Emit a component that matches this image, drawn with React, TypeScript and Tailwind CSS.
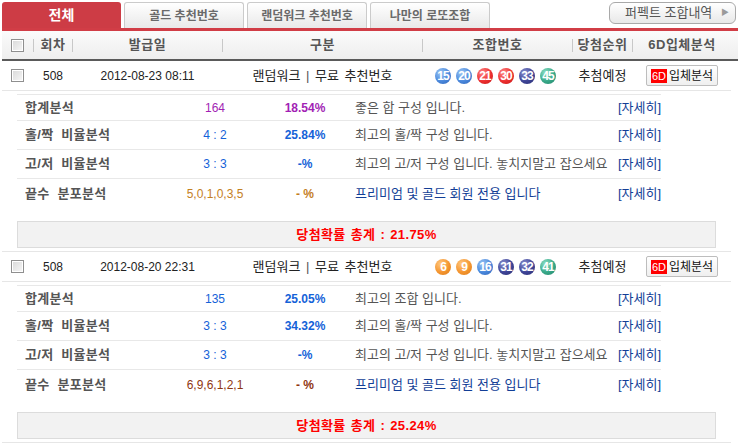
import React from "react";

type Detail = {
  label: string;
  value: string;
  pct: string;
  desc: string;
  tone: string;
  premium?: boolean;
};

type Entry = {
  round: string;
  date: string;
  balls: number[];
  details: Detail[];
  total: string;
};

const entries: Entry[] = [
  {
    round: "508",
    date: "2012-08-23 08:11",
    balls: [15, 20, 21, 30, 33, 45],
    total: "21.75%",
    details: [
      { label: "합계분석", value: "164", pct: "18.54%", desc: "좋은 합 구성 입니다.", tone: "text-[#a21fb4]" },
      { label: "홀/짝 비율분석", value: "4 : 2", pct: "25.84%", desc: "최고의 홀/짝 구성 입니다.", tone: "text-[#1462d8]" },
      { label: "고/저 비율분석", value: "3 : 3", pct: "-%", desc: "최고의 고/저 구성 입니다. 놓치지말고 잡으세요", tone: "text-[#1462d8]" },
      { label: "끝수 분포분석", value: "5,0,1,0,3,5", pct: "- %", desc: "프리미엄 및 골드 회원 전용 입니다", tone: "text-[#c4801f]", premium: true },
    ],
  },
  {
    round: "508",
    date: "2012-08-20 22:31",
    balls: [6, 9, 16, 31, 32, 41],
    total: "25.24%",
    details: [
      { label: "합계분석", value: "135", pct: "25.05%", desc: "최고의 조합 입니다.", tone: "text-[#1462d8]" },
      { label: "홀/짝 비율분석", value: "3 : 3", pct: "34.32%", desc: "최고의 홀/짝 구성 입니다.", tone: "text-[#1462d8]" },
      { label: "고/저 비율분석", value: "3 : 3", pct: "-%", desc: "최고의 고/저 구성 입니다. 놓치지말고 잡으세요", tone: "text-[#1462d8]" },
      { label: "끝수 분포분석", value: "6,9,6,1,2,1", pct: "- %", desc: "프리미엄 및 골드 회원 전용 입니다", tone: "text-[#8f3510]", premium: true },
    ],
  },
];

function ballColor(n: number) {
  if (n <= 10) return "bg-[radial-gradient(circle_at_35%_30%,#ffc77e_0%,#f4952f_55%,#dc7a16_100%)]";
  if (n <= 20) return "bg-[radial-gradient(circle_at_35%_30%,#9cc6f4_0%,#4a88dc_55%,#2d63b6_100%)]";
  if (n <= 30) return "bg-[radial-gradient(circle_at_35%_30%,#ff8a8a_0%,#ec2f2f_55%,#c41616_100%)]";
  if (n <= 40) return "bg-[radial-gradient(circle_at_35%_30%,#8a90d0_0%,#3e4496_55%,#2a2e72_100%)]";
  return "bg-[radial-gradient(circle_at_35%_30%,#8ee0c6_0%,#38a888_55%,#22846a_100%)]";
}

function Ball({ n }: { n: number }) {
  return (
    <span
      className={`flex h-[16px] w-[16px] shrink-0 items-center justify-center rounded-full text-[12px] font-bold leading-none tracking-[-1px] text-white ${ballColor(n)}`}
    >
      {n}
    </span>
  );
}

function Checkbox() {
  return (
    <span className="block h-[13px] w-[13px] border border-[#8f8f8f] bg-[linear-gradient(135deg,#d8d8d8,#f7f7f7)] shadow-[inset_0_0_0_1px_#fff]" />
  );
}

function Sep() {
  return <span className="h-[13px] w-px bg-[#c8c8c8]" />;
}

function Tab({ label, active }: { label: string; active?: boolean }) {
  if (active) {
    return (
      <div className="flex h-[26px] w-[119px] items-center justify-center rounded-t-[3px] bg-[#cd3c45] text-[14px] font-bold text-white">
        {label}
      </div>
    );
  }
  return (
    <div className="flex h-[26px] w-[120px] items-center justify-center rounded-t-[3px] border border-b-0 border-[#cbcbcb] bg-[linear-gradient(#ffffff,#e9e9e9)] text-[12px] font-bold text-[#6a6a6a]">
      {label}
    </div>
  );
}

function EntryBlock({ entry }: { entry: Entry }) {
  return (
    <div className="border-b border-[#e6e6e6] pb-[3px]">
      <div className="flex h-[30px] items-center border-b border-[#e6e6e6] text-[12px] text-[#222]">
        <div className="flex w-[31px] justify-center">
          <Checkbox />
        </div>
        <div className="w-px" />
        <div className="w-[38px] text-center">{entry.round}</div>
        <div className="w-px" />
        <div className="w-[149px] text-center">{entry.date}</div>
        <div className="w-px" />
        <div className="w-[199px] text-center text-[13px] whitespace-nowrap [word-spacing:2px]">
          랜덤워크 <span className="text-[#555]">|</span> 무료 추천번호
        </div>
        <div className="w-px" />
        <div className="flex w-[149px] items-center justify-center gap-[5px] pr-[4px]">
          {entry.balls.map((n, i) => (
            <Ball key={i} n={n} />
          ))}
        </div>
        <div className="w-px" />
        <div className="w-[59px] text-center text-[13px] whitespace-nowrap">추첨예정</div>
        <div className="w-px" />
        <div className="flex w-[98px] justify-center">
          <button className="flex h-[21px] items-center justify-center gap-[2px] whitespace-nowrap rounded-[2px] border border-[#bdbdbd] bg-[linear-gradient(#ffffff,#efefef)] px-[4px] text-[12px] text-[#111]">
            <span className="bg-[#ff0000] px-[1px] text-[11px] leading-[14px] text-white">6D</span>
            입체분석
          </button>
        </div>
      </div>

      <div className="ml-[15px] mt-[3px] w-[644px] border-t border-[#e8e8e8]">
        {entry.details.map((d, i) => (
          <div
            key={i}
            className={`flex items-center ${i === 0 ? "h-[26px]" : "h-[29px]"} ${
              i < entry.details.length - 1 ? "border-b border-[#e8e8e8]" : ""
            }`}
          >
            <div className="w-[143px] pl-[8px] text-[13px] font-bold tracking-[0.3px] text-[#555] whitespace-nowrap [word-spacing:4px]">
              {d.label}
            </div>
            <div className={`w-[110px] text-center text-[12px] ${d.tone}`}>{d.value}</div>
            <div className={`w-[70px] text-center text-[12px] font-bold ${d.tone}`}>{d.pct}</div>
            <div
              className={`flex-1 pl-[15px] text-[13px] whitespace-nowrap ${
                d.premium ? "text-[#123e96]" : "text-[#555]"
              }`}
            >
              {d.desc}
            </div>
            <div className="text-[13px] text-[#123e96]">[자세히]</div>
          </div>
        ))}
      </div>

      <div className="ml-[15px] mt-[13px] flex h-[27px] w-[699px] items-center justify-center border border-[#dcdcdc] bg-[#f2f2f2] text-[13px] font-bold tracking-[0.4px] text-[#ff0000] [word-spacing:1px]">
        당첨확률 총계 : {entry.total}
      </div>
    </div>
  );
}

export default function App() {
  return (
    <div className="h-[447px] w-[738px] overflow-hidden bg-white font-['Liberation_Sans','Noto_Sans_CJK_KR',sans-serif]">
      <div className="flex h-[28px] items-end justify-between pl-[2px]">
        <div className="flex items-end gap-[3px]">
          <Tab label="전체" active />
          <Tab label="골드 추천번호" />
          <Tab label="랜덤워크 추천번호" />
          <Tab label="나만의 로또조합" />
        </div>
        <div className="mr-[2px] mt-[2px] flex h-[22px] w-[127px] items-center justify-between self-start rounded-[6px] border border-[#a9a9a9] bg-[linear-gradient(#ffffff,#e8e8e8)] pl-[15px] pr-[6px] text-[13px] text-[#555]">
          퍼펙트 조합내역
          <span className="text-[8px] text-[#9a9a9a]">▶</span>
        </div>
      </div>
      <div className="ml-[2px] h-[3px] bg-[#d13d46]" />

      <div className="ml-[2px] flex h-[30px] items-center border-b-2 border-[#5a5a5a] bg-[linear-gradient(#fbfbfb,#eeeeee)] text-[13px] font-bold tracking-[0.5px] text-[#555]">
        <div className="flex w-[31px] justify-center">
          <Checkbox />
        </div>
        <Sep />
        <div className="w-[38px] text-center">회차</div>
        <Sep />
        <div className="w-[149px] text-center">발급일</div>
        <Sep />
        <div className="w-[199px] text-center">구분</div>
        <Sep />
        <div className="w-[149px] text-center">조합번호</div>
        <Sep />
        <div className="w-[59px] text-center whitespace-nowrap">당첨순위</div>
        <Sep />
        <div className="w-[98px] text-center">6D입체분석</div>
      </div>

      <div className="ml-[2px] w-[729px]">
        {entries.map((e, i) => (
          <EntryBlock key={i} entry={e} />
        ))}
      </div>
      <div className="mt-[4px] border-t-2 border-[#5a5a5a]" />
    </div>
  );
}
